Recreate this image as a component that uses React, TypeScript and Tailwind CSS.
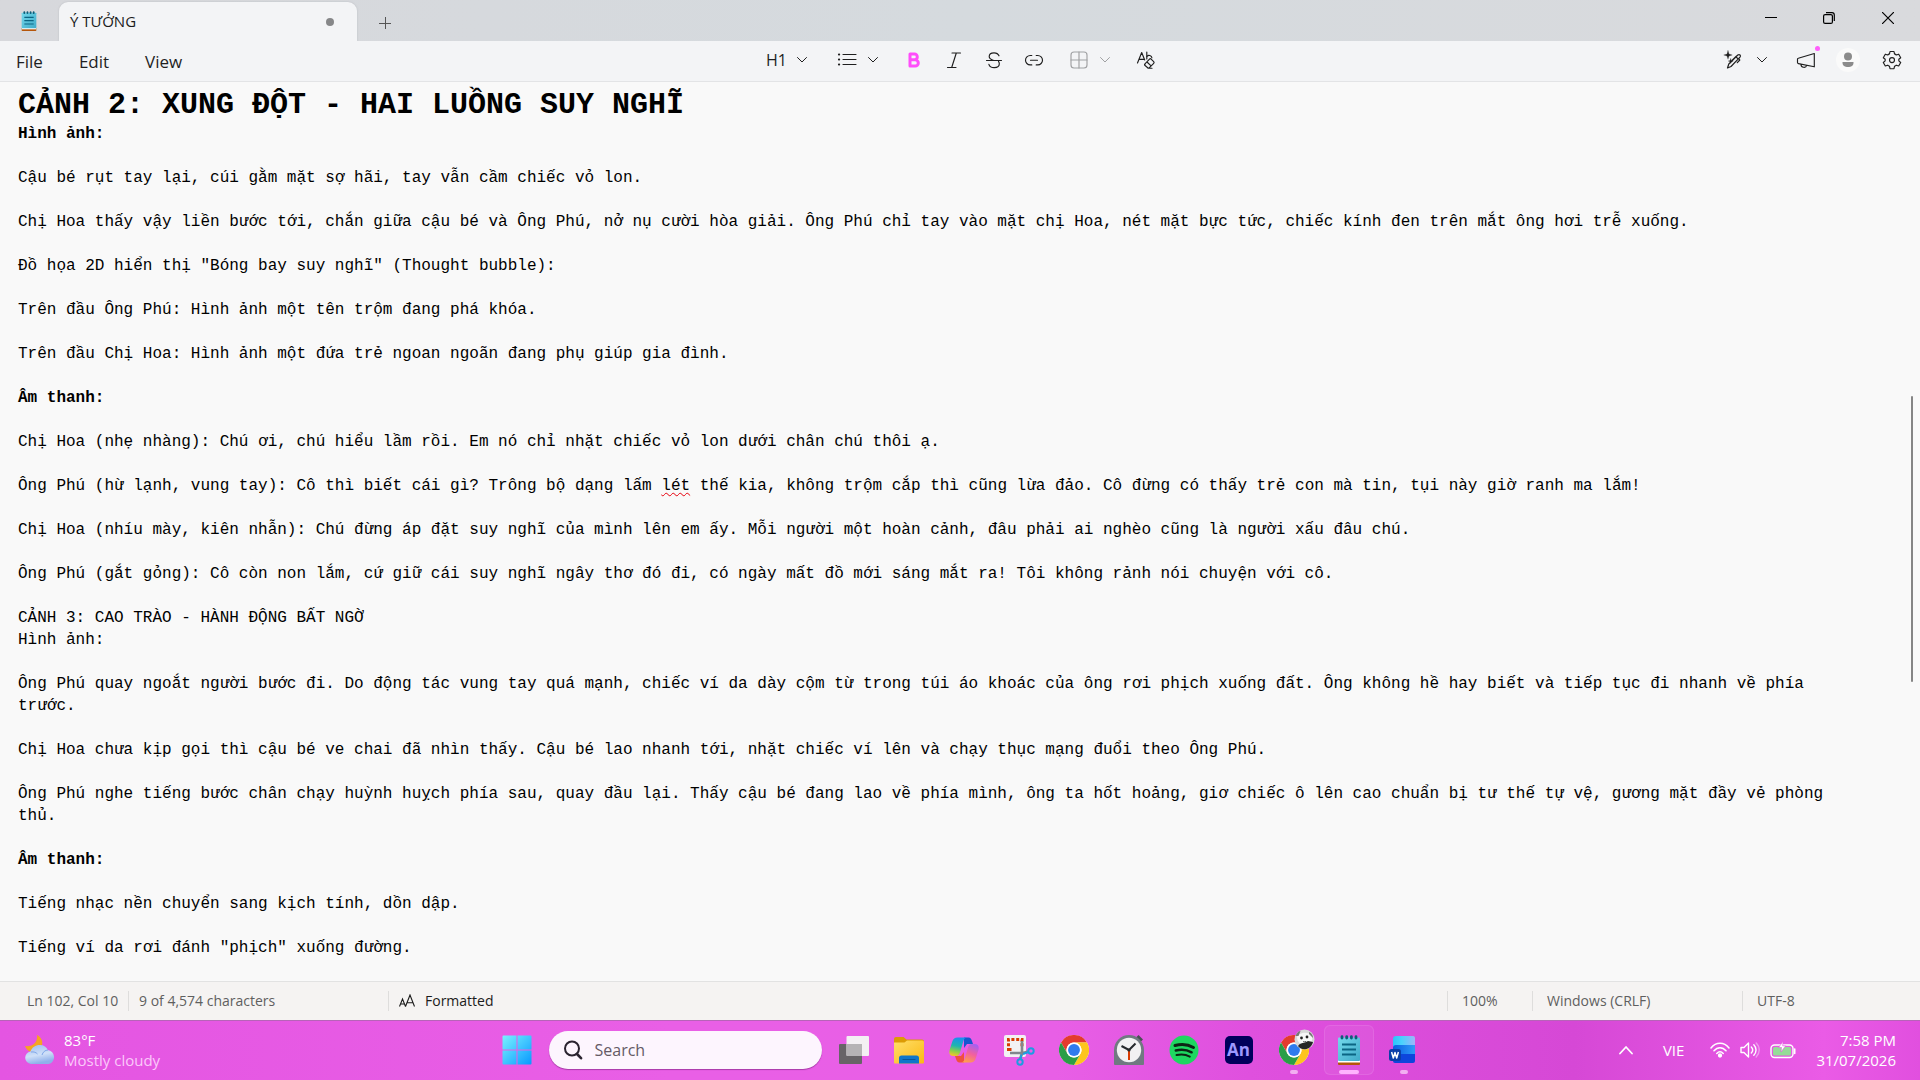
import React from "react";

type Line = { text: string; bold?: boolean; typo?: string };

const lines: Line[] = [
  { text: "Hình ảnh:", bold: true },
  { text: "" },
  { text: "Cậu bé rụt tay lại, cúi gằm mặt sợ hãi, tay vẫn cầm chiếc vỏ lon." },
  { text: "" },
  {
    text: "Chị Hoa thấy vậy liền bước tới, chắn giữa cậu bé và Ông Phú, nở nụ cười hòa giải. Ông Phú chỉ tay vào mặt chị Hoa, nét mặt bực tức, chiếc kính đen trên mắt ông hơi trễ xuống.",
  },
  { text: "" },
  { text: 'Đồ họa 2D hiển thị "Bóng bay suy nghĩ" (Thought bubble):' },
  { text: "" },
  { text: "Trên đầu Ông Phú: Hình ảnh một tên trộm đang phá khóa." },
  { text: "" },
  { text: "Trên đầu Chị Hoa: Hình ảnh một đứa trẻ ngoan ngoãn đang phụ giúp gia đình." },
  { text: "" },
  { text: "Âm thanh:", bold: true },
  { text: "" },
  { text: "Chị Hoa (nhẹ nhàng): Chú ơi, chú hiểu lầm rồi. Em nó chỉ nhặt chiếc vỏ lon dưới chân chú thôi ạ." },
  { text: "" },
  {
    text: "Ông Phú (hừ lạnh, vung tay): Cô thì biết cái gì? Trông bộ dạng lấm lét thế kia, không trộm cắp thì cũng lừa đảo. Cô đừng có thấy trẻ con mà tin, tụi này giờ ranh ma lắm!",
    typo: "lét",
  },
  { text: "" },
  {
    text: "Chị Hoa (nhíu mày, kiên nhẫn): Chú đừng áp đặt suy nghĩ của mình lên em ấy. Mỗi người một hoàn cảnh, đâu phải ai nghèo cũng là người xấu đâu chú.",
  },
  { text: "" },
  {
    text: "Ông Phú (gắt gỏng): Cô còn non lắm, cứ giữ cái suy nghĩ ngây thơ đó đi, có ngày mất đồ mới sáng mắt ra! Tôi không rảnh nói chuyện với cô.",
  },
  { text: "" },
  { text: "CẢNH 3: CAO TRÀO - HÀNH ĐỘNG BẤT NGỜ" },
  { text: "Hình ảnh:" },
  { text: "" },
  {
    text: "Ông Phú quay ngoắt người bước đi. Do động tác vung tay quá mạnh, chiếc ví da dày cộm từ trong túi áo khoác của ông rơi phịch xuống đất. Ông không hề hay biết và tiếp tục đi nhanh về phía trước.",
  },
  { text: "" },
  {
    text: "Chị Hoa chưa kịp gọi thì cậu bé ve chai đã nhìn thấy. Cậu bé lao nhanh tới, nhặt chiếc ví lên và chạy thục mạng đuổi theo Ông Phú.",
  },
  { text: "" },
  {
    text: "Ông Phú nghe tiếng bước chân chạy huỳnh huỵch phía sau, quay đầu lại. Thấy cậu bé đang lao về phía mình, ông ta hốt hoảng, giơ chiếc ô lên cao chuẩn bị tư thế tự vệ, gương mặt đầy vẻ phòng thủ.",
  },
  { text: "" },
  { text: "Âm thanh:", bold: true },
  { text: "" },
  { text: "Tiếng nhạc nền chuyển sang kịch tính, dồn dập." },
  { text: "" },
  { text: 'Tiếng ví da rơi đánh "phịch" xuống đường.' },
];

const TextLine = ({ line }: { line: Line }) => {
  const [before, after] = line.typo ? line.text.split(line.typo) : [line.text, ""];
  return (
    <p className={line.bold ? "min-h-[22px] font-bold" : "min-h-[22px]"}>
      {before}
      {line.typo && (
        <span className="underline decoration-red-600 decoration-wavy decoration-1 underline-offset-2">
          {line.typo}
        </span>
      )}
      {after}
    </p>
  );
};

/* ---------- small line icons ---------- */

const Chevron = ({ up = false }: { up?: boolean }) => (
  <svg width="12" height="12" viewBox="0 0 12 12" fill="none" stroke="currentColor" strokeWidth="1" strokeLinecap="round" strokeLinejoin="round">
    <path d={up ? "M1.5 8.5 6 4l4.5 4.5" : "M1.5 3.5 6 8l4.5-4.5"} />
  </svg>
);

const Icon = ({ children, width = 1.15 }: { children: React.ReactNode; width?: number }) => (
  <svg width="20" height="20" viewBox="0 0 20 20" fill="none" stroke="currentColor" strokeWidth={width} strokeLinecap="round" strokeLinejoin="round">
    {children}
  </svg>
);

const ListIcon = () => (
  <Icon>
    <path d="M6 4.5h13M6 9.5h13M6 14.5h13" />
    <path d="M2 4.5h.1M2 9.5h.1M2 14.5h.1" strokeWidth="2.2" />
  </Icon>
);

const BoldIcon = () => (
  <Icon width={3}>
    <path d="M6 4h4.4a2.9 2.9 0 0 1 0 5.8H6zM6 9.8h5.2a3.1 3.1 0 0 1 0 6.2H6z" />
  </Icon>
);

const ItalicIcon = () => (
  <Icon>
    <path d="M8 3h8.500M3.500 17.500H12M12.300 3 7.700 17.500" />
  </Icon>
);

const StrikeIcon = () => (
  <Icon>
    <path d="M2.500 10.500h15M15 5.800C14.200 3.800 12.400 2.800 10 2.800c-2.800 0-4.800 1.500-4.800 3.700 0 2 1.500 3 4.600 4M14.500 11.500c.6.600.8 1.400.8 2.200 0 2.300-2.100 3.900-5 3.900-2.700 0-4.800-1.200-5.400-3.300" />
  </Icon>
);

const LinkIcon = () => (
  <Icon>
    <path d="M7.800 5.500H6.200a4.700 4.700 0 0 0 0 9.400h1.600M12.200 5.500h1.600a4.700 4.700 0 0 1 0 9.400h-1.600M6.500 10.200h7" />
  </Icon>
);

const TableIcon = () => (
  <Icon>
    <rect x="2" y="2" width="16" height="16" rx="3" />
    <path d="M10 2v16M2 10h16" />
  </Icon>
);

const ClearFormatIcon = () => (
  <Icon>
    <path d="M1.500 13 5.700 2.500 8.700 10M3 9.300h5M10.800 2v7" />
    <path d="M10.900 6.500c1.500-2 4.700-1.100 5 1.300" />
    <path d="m8.500 14.300 5-5.200c.5-.5 1.100-.5 1.600 0l2.600 2.600c.5.500.5 1.100 0 1.600l-4.300 4.400c-.5.500-1.200.5-1.700 0l-2.900-2.400c-.3-.3-.3-.7.300-1zM11 12l3.800 3.700M12 18.200h4" />
  </Icon>
);

const RewriteIcon = () => (
  <Icon width={1.2}>
    <path d="M6 .500 7 4l3.300 1L7 6 6 9.300 5 6 1.700 5 5 4zM8.700 8.500l.7 1.900 1.900.6-1.900.7-.7 1.800-.6-1.800-1.900-.7 1.900-.6z" fill="currentColor" strokeWidth="0.2" />
    <path d="m5.500 18 1.300-4 9-9c1.700-1.300 3.500.5 2.200 2.200l-9 9.300zM14.200 7l2 2.200M17 8.700l.8 1.300-2.500 2.700M10 10.500l4-4" />
  </Icon>
);

const MegaphoneIcon = () => (
  <Icon>
    <path d="M18.300 3.500v13.300L2.400 13.600a1 1 0 0 1-.9-1V9.300a1 1 0 0 1 .8-1zM5 14.200c-.2 3.600 5 4.200 5.600 1.100" />
  </Icon>
);

const GearIcon = () => (
  <Icon>
    <path d="m8 1.500-.5 2.400c-.7.300-1.300.6-1.800 1.100l-2.400-.8-2 3.500 1.900 1.600c-.1.500-.1 1.100 0 1.600l-1.900 1.600 2 3.500 2.400-.8c.5.500 1.100.8 1.800 1.100l.5 2.400h4l.5-2.400c.7-.3 1.300-.6 1.800-1.100l2.400.8 2-3.500-1.900-1.600c.1-.5.100-1.100 0-1.600l1.900-1.600-2-3.500-2.400.8c-.5-.5-1.100-.8-1.800-1.100L12 1.500z" />
    <circle cx="10" cy="10.100" r="2.500" />
  </Icon>
);

/* ---------- colour icons ---------- */

const NotepadIcon = ({ size }: { size: number }) => (
  <svg width={size} height={size} viewBox="0 0 30 30">
    <defs>
      <linearGradient id="pad" x1="0" y1="0" x2="1" y2="1">
        <stop offset="0" stopColor="#74d9ec" />
        <stop offset="1" stopColor="#3faac8" />
      </linearGradient>
    </defs>
    <rect x="4" y="25" width="22" height="5" rx="1" fill="#b5560b" />
    <rect x="4" y="25" width="22" height="2.500" fill="#fff" />
    <rect x="4" y="2.500" width="22" height="23.500" rx="1" fill="url(#pad)" />
    <path d="M8 1.700v1.400M12.700 1.700v1.400M17.400 1.700v1.400M22 1.700v1.400" stroke="#0d5d78" strokeWidth="2.800" strokeLinecap="round" />
    <path d="M8 9.500h14M8 14.500h14M8 19.500h14" stroke="#0b6583" strokeWidth="1.800" />
  </svg>
);

const WeatherIcon = () => (
  <svg width="32" height="32" viewBox="0 0 32 32">
    <defs>
      <linearGradient id="cloud" x1="0" y1="0" x2="0.300" y2="1">
        <stop offset="0" stopColor="#9dbdf2" />
        <stop offset="0.600" stopColor="#cfe0f8" />
        <stop offset="1" stopColor="#8fb0ea" />
      </linearGradient>
    </defs>
    <path d="M13 1c4 2 6 6 5 10s-5 7-9 7c-4 0-7-3-8-6 7 1 13-3 12-11z" fill="#f6a323" />
    <path d="M7 30a6.300 6.300 0 0 1-.5-12.500C8 13 12 10.800 16 11c4 0 6.500 2 7.800 5A7.100 7.100 0 0 1 24.500 30z" fill="url(#cloud)" />
    <path d="M18 21c1-3 3-5 6-5M7 18c3-.5 5 .500 6.500 2" stroke="#7ea6e8" strokeWidth="1" fill="none" />
  </svg>
);

const WindowsIcon = () => (
  <svg width="30" height="30" viewBox="0 0 30 30">
    <defs>
      <linearGradient id="win" gradientUnits="userSpaceOnUse" x1="0" y1="0" x2="30" y2="30">
        <stop offset="0" stopColor="#7cf4ff" />
        <stop offset="1" stopColor="#0697ff" />
      </linearGradient>
    </defs>
    <path d="M.500 1.500a1 1 0 0 1 1-1h13v14H.500zM15.500.500h13a1 1 0 0 1 1 1v13h-14zM.500 15.500h14v14h-13a1 1 0 0 1-1-1zM15.500 15.500h14v13a1 1 0 0 1-1 1h-13z" fill="url(#win)" />
  </svg>
);

const TaskViewIcon = () => (
  <svg width="30" height="30" viewBox="0 0 30 30">
    <rect x="0" y="9" width="23" height="20" rx="1" fill="#676467" />
    <rect x="7.500" y="1" width="22.500" height="20" rx="1" fill="#f3f0f3" />
    <path d="M7.500 9H23v12H8.500a1 1 0 0 1-1-1z" fill="#b5b3b5" />
  </svg>
);

const ExplorerIcon = () => (
  <svg width="30" height="30" viewBox="0 0 30 30">
    <defs>
      <linearGradient id="folder" x1="0" y1="0" x2="1" y2="1">
        <stop offset="0" stopColor="#ffdf69" />
        <stop offset="1" stopColor="#fbb913" />
      </linearGradient>
    </defs>
    <path d="M0 4a2 2 0 0 1 2-2h7.500l3 2.500H28a2 2 0 0 1 2 2V12H0z" fill="#dc9b04" />
    <path d="M0 7.500h10.500L13 5.500h15.500A1.500 1.500 0 0 1 30 7v20.500a1 1 0 0 1-1 1H1a1 1 0 0 1-1-1z" fill="url(#folder)" />
    <path d="M5 28.500V23a2.500 2.500 0 0 1 2.500-2.500h15A2.500 2.500 0 0 1 25 23v5.500z" fill="#0f76c9" />
    <path d="M9 24.500h12" stroke="#07549b" strokeWidth="1.200" strokeLinecap="round" />
  </svg>
);

const CopilotIcon = () => (
  <svg width="30" height="30" viewBox="0 0 30 30">
    <defs>
      <linearGradient id="copLeft" x1="0.500" y1="0" x2="0.300" y2="1">
        <stop offset="0" stopColor="#1a8ff0" />
        <stop offset="0.450" stopColor="#1fb5b0" />
        <stop offset="0.750" stopColor="#8bd04a" />
        <stop offset="1" stopColor="#f5c52c" />
      </linearGradient>
      <linearGradient id="copRight" x1="0.700" y1="0" x2="0.300" y2="1">
        <stop offset="0" stopColor="#a660f2" />
        <stop offset="0.500" stopColor="#f2609f" />
        <stop offset="1" stopColor="#ffa04a" />
      </linearGradient>
    </defs>
    <path d="M15 2.500h4.500c2 0 2.800 1.300 3.400 3.200L24 9h-6l-3 4z" fill="#1557d0" />
    <path d="M15 27.500h-4.500c-2 0-2.800-1.300-3.400-3.200L6 21h6l3-4z" fill="#f0503f" />
    <path d="M8.500 2.500H18c-2 0-3 1.500-3.600 3.500L10.800 18c-.6 2-1.800 3-3.600 3H4.500C.8 21-.3 18.500.600 15l2.700-8.500C4.100 4 5.800 2.500 8.500 2.500z" fill="url(#copLeft)" />
    <path d="M21.500 27.500H12c2 0 3-1.500 3.600-3.500L19.200 12c.6-2 1.800-3 3.600-3h2.700c3.700 0 4.800 2.500 3.900 6l-2.700 8.500c-.8 2.500-2.500 4-5.200 4z" fill="url(#copRight)" />
  </svg>
);

const SnipIcon = () => (
  <svg width="32" height="32" viewBox="0 0 32 32" fill="none">
    <rect x="1" y="1" width="22" height="22" rx="2" fill="#f2f1f3" />
    <path d="M5.500 17V5.500H19V13M5.500 15.500h4" stroke="#d83b01" strokeWidth="3" strokeDasharray="3 1.800" />
    <path d="M19 7v12.500L17 25M7 19h13l5-1.500" stroke="#81878d" strokeWidth="2.600" />
    <circle cx="28" cy="17" r="2.700" stroke="#1b9de2" strokeWidth="2" />
    <circle cx="17" cy="28" r="2.700" stroke="#1b9de2" strokeWidth="2" />
    <path d="m20 20 5.500-2M18.500 20.500 17.500 25" stroke="#1b9de2" strokeWidth="2" />
  </svg>
);

const ChromeIcon = () => (
  <svg width="30" height="30" viewBox="0 0 48 48">
    <circle cx="24" cy="24" r="24" fill="#fff" />
    <path d="M3.200 12A24 24 0 0 1 44.800 12H24a12 12 0 0 0-10.400 18z" fill="#e33b2e" />
    <path d="M44.800 12A24 24 0 0 1 24 48l10.400-18A12 12 0 0 0 24 12z" fill="#fdc51d" />
    <path d="M24 48A24 24 0 0 1 3.200 12l10.400 18a12 12 0 0 0 20.800 0z" fill="#2a9e47" />
    <circle cx="24" cy="24" r="12" fill="#fff" />
    <circle cx="24" cy="24" r="9.500" fill="#2f7bee" />
  </svg>
);

const ChromeProfileIcon = () => (
  <span className="relative">
    <ChromeIcon />
    <svg className="absolute -top-1.5 -right-1.5" width="21" height="21" viewBox="0 0 21 21">
      <circle cx="10.500" cy="10.500" r="10" fill="#d9d9d9" />
      <path d="M3 8c2-5 12-6 15-1 1 4-1 8-4 9-5 2-11-2-11-8z" fill="#f7f7f7" />
      <path d="M1.500 7c1-3 3-5 5-5l-2 5zM15 3c3 1 4 4 4 6l-4-4z" fill="#777" />
      <circle cx="7.500" cy="9" r="1.400" fill="#222" />
      <circle cx="13" cy="8" r="1.400" fill="#222" />
      <path d="M4 17c2-3 4-3 6-3l4-2 5 1c-1 4-4 7-8 7.300-3 .2-5-1-7-3.300z" fill="#252525" />
      <path d="M9 12.500c1 .700 2 .600 3-.200" stroke="#333" fill="none" />
    </svg>
  </span>
);

const ClockIcon = () => (
  <svg width="30" height="30" viewBox="0 0 30 30">
    <path d="m24.500 0 4.500 4.500-2.500 2.500L22 2.500z" fill="#494f55" />
    <path d="M0 15a15 15 0 0 1 30 0v14a1 1 0 0 1-1 1H1a1 1 0 0 1-1-1z" fill="#707981" />
    <circle cx="15" cy="15" r="12.200" fill="#f1f1f2" />
    <path d="M7.500 11 15 15l6.500-6.500" stroke="#25292c" strokeWidth="2" fill="none" />
    <path d="M15 15v10" stroke="#d83b01" strokeWidth="2" />
    <circle cx="15" cy="15" r="1.600" fill="#25292c" />
  </svg>
);

const SpotifyIcon = () => (
  <svg width="30" height="30" viewBox="0 0 30 30" fill="none" stroke="#0d2414" strokeLinecap="round">
    <circle cx="15" cy="15" r="14.500" fill="#1ed760" stroke="none" />
    <path d="M6 10.500c6.500-1.800 13-1.200 18.500 2" strokeWidth="3" />
    <path d="M6.800 15.500c5.500-1.500 11-.9 15.800 1.800" strokeWidth="2.500" />
    <path d="M7.500 20c5-1.200 9.300-.7 13.300 1.600" strokeWidth="2" />
  </svg>
);

const AnimateIcon = () => (
  <span className="flex h-7 w-7 items-center justify-center rounded-[5px] bg-[#00005b] font-['Open_Sans',sans-serif] text-[17px] font-bold text-[#9d99ff]">
    An
  </span>
);

const WordIcon = () => (
  <svg width="30" height="30" viewBox="0 0 30 30">
    <defs>
      <linearGradient id="wTop" x1="0" y1="0" x2="1" y2="0">
        <stop offset="0" stopColor="#2cc5fb" />
        <stop offset="0.400" stopColor="#4ad2fd" />
        <stop offset="1" stopColor="#9fb4fa" />
      </linearGradient>
      <linearGradient id="wMid" x1="0" y1="0" x2="1" y2="0">
        <stop offset="0" stopColor="#0a5ee0" />
        <stop offset="1" stopColor="#2e9bf8" />
      </linearGradient>
    </defs>
    <path d="M4 4a3 3 0 0 1 3-3h17a2 2 0 0 1 2 2v8H4z" fill="url(#wTop)" />
    <path d="M4 13a3 3 0 0 1 3-3h19v10H4z" fill="url(#wMid)" />
    <path d="M4 19h22v7a2 2 0 0 1-2 2H6a2 2 0 0 1-2-2z" fill="#0d45dc" />
    <rect x="0" y="14" width="12" height="12" rx="2.500" fill="#0b3fa8" />
    <path d="m2.600 17 1.700 6L6 17.500 7.700 23l1.700-6" stroke="#fff" strokeWidth="1.500" fill="none" strokeLinejoin="round" />
  </svg>
);

const SearchIcon = () => (
  <svg width="20" height="20" viewBox="0 0 20 20" fill="none" stroke="#2b2430" strokeWidth="2" strokeLinecap="round">
    <circle cx="9" cy="8.500" r="7" />
    <path d="m14 14 4 4.200" strokeWidth="2.600" />
  </svg>
);

const WifiIcon = () => (
  <svg width="20" height="16" viewBox="0 0 20 16" fill="none" stroke="#fff" strokeWidth="1.500" strokeLinecap="round">
    <path d="M1 6C6-.3 14-.3 19 6M4 8.800c3.500-4.200 8.500-4.200 12 0M6.800 11.500c2-2.300 4.400-2.300 6.400 0" />
    <circle cx="10" cy="13.500" r="1.400" fill="#fff" />
  </svg>
);

const SoundIcon = () => (
  <svg width="20" height="18" viewBox="0 0 20 18" fill="none" stroke="#fff" strokeWidth="1.400" strokeLinecap="round" strokeLinejoin="round">
    <path d="M1 6.500h3L8.500 2v14L4 11.500H1zM11.300 6c1.600 1.700 1.600 4.300 0 6M13.800 3.800c3 3 3 7.400 0 10.400" />
    <path d="M16.200 2c4 4 4 10 0 14" opacity="0.400" />
  </svg>
);

const BatteryIcon = () => (
  <svg width="26" height="18" viewBox="0 0 26 18" fill="none">
    <rect x="1" y="4" width="22" height="12.500" rx="3.500" stroke="#fff" strokeWidth="1.400" />
    <rect x="3" y="6" width="18" height="8.500" rx="1.500" fill="#96dc98" />
    <path d="M24.700 8v4.500" stroke="#fff" strokeWidth="1.600" strokeLinecap="round" />
    <path d="M13 .500 8.500 6.500h3L11 11l4.700-6.200h-3z" fill="#fff" stroke="#e455e1" strokeWidth="0.600" />
  </svg>
);

const taskbarApps = [
  { name: "Task View", icon: <TaskViewIcon /> },
  { name: "File Explorer", icon: <ExplorerIcon /> },
  { name: "Copilot", icon: <CopilotIcon /> },
  { name: "Snipping Tool", icon: <SnipIcon /> },
  { name: "Chrome", icon: <ChromeIcon /> },
  { name: "Clock", icon: <ClockIcon /> },
  { name: "Spotify", icon: <SpotifyIcon /> },
  { name: "Animate", icon: <AnimateIcon /> },
  { name: "Chrome profile", icon: <ChromeProfileIcon />, open: true },
  { name: "Notepad", icon: <NotepadIcon size={30} />, active: true },
  { name: "Word", icon: <WordIcon />, open: true },
];

const TitleBar = () => (
  <header className="flex h-[41px] bg-linear-to-r from-[#d7d8dc] via-[#d5dade] to-[#d9dadd]">
    <div className="flex w-[59px] items-center justify-center pr-0.5">
      <NotepadIcon size={20} />
    </div>
    <div className="mt-0.5 flex w-[298px] items-center justify-between rounded-t-[9px] bg-[#f3f4f6] pr-[23px] pl-[11px] shadow-[0_0_2px_#b8babf]">
      <span className="text-[15px] text-[#1b1b1b]">Ý TƯỞNG</span>
      <span className="h-2 w-2 rounded-full bg-[#868789]" />
    </div>
    <button aria-label="New tab" className="ml-[18px] flex w-5 items-center justify-center pt-1 text-[#555]">
      <svg width="12" height="12" viewBox="0 0 12 12" stroke="currentColor">
        <path d="M0 6.500h12M6.500 0v12" />
      </svg>
    </button>
    <div className="ml-auto flex pr-0.5 pb-1.5 text-black">
      <button aria-label="Minimize" className="flex w-[58px] items-center justify-center">
        <svg width="12" height="12" viewBox="0 0 12 12" stroke="currentColor">
          <path d="M0 5.500h12" />
        </svg>
      </button>
      <button aria-label="Restore" className="flex w-[58px] items-center justify-center">
        <svg width="12" height="12" viewBox="0 0 12 12" fill="none" stroke="currentColor" strokeWidth="1.200">
          <rect x="0.600" y="2.600" width="8.800" height="8.800" rx="1.500" />
          <path d="M3 .700h6a2.300 2.300 0 0 1 2.300 2.300v6" />
        </svg>
      </button>
      <button aria-label="Close" className="flex w-[60px] items-center justify-center">
        <svg width="12" height="12" viewBox="0 0 12 12" stroke="currentColor" strokeWidth="1.200">
          <path d="m0 0 12 12M12 0 0 12" />
        </svg>
      </button>
    </div>
  </header>
);

const Toolbar = () => (
  <nav className="flex h-[41px] items-center border-b border-[#e3e4e6] bg-[#f3f4f6] pb-0.5 text-[#1f1f1f]">
    <div className="flex flex-1 gap-9 pt-1 pl-4 text-[17px]">
      <button>File</button>
      <button>Edit</button>
      <button>View</button>
    </div>
    <div className="flex items-center gap-[21px]">
      <button aria-label="Headings" className="flex items-center gap-2.5 px-1">
        <span className="w-5">H1</span>
        <Chevron />
      </button>
      <button aria-label="Lists" className="flex items-center gap-2.5 px-1">
        <ListIcon />
        <Chevron />
      </button>
      <div className="flex gap-5">
        <button aria-label="Bold" className="text-[#ff4dfb]">
          <BoldIcon />
        </button>
        <button aria-label="Italic">
          <ItalicIcon />
        </button>
        <button aria-label="Strikethrough">
          <StrikeIcon />
        </button>
        <button aria-label="Link">
          <LinkIcon />
        </button>
      </div>
      <button aria-label="Table" className="flex items-center gap-2.5 px-1 text-[#a0a1a3]">
        <TableIcon />
        <Chevron />
      </button>
      <button aria-label="Clear formatting">
        <ClearFormatIcon />
      </button>
    </div>
    <div className="flex flex-1 items-center justify-end pr-[18px]">
      <button aria-label="Rewrite" className="mr-7 flex items-center gap-3.5">
        <RewriteIcon />
        <Chevron />
      </button>
      <button aria-label="What's new" className="relative mr-5">
        <MegaphoneIcon />
        <span className="absolute -top-1 -right-1 h-[5px] w-[5px] rounded-full bg-[#ff5ffb]" />
      </button>
      <button aria-label="Account" className="mr-[22px] rounded-full bg-[#fafafa]">
        <svg width="24" height="24" viewBox="0 0 24 24" fill="#8b8b8b">
          <circle cx="12" cy="8.500" r="4" />
          <path d="M6.500 14h11v.700c0 3-2.500 4.300-5.500 4.300s-5.500-1.300-5.500-4.300z" />
        </svg>
      </button>
      <button aria-label="Settings">
        <GearIcon />
      </button>
    </div>
  </nav>
);

const StatusBar = () => (
  <footer className="flex h-[39px] items-center border-t border-[#e2e2e2] bg-[#f5f3f2] text-sm leading-5 text-[#5f5f5f]">
    <span className="w-[129px] border-r border-[#dedddc] pl-[27px]">Ln 102, Col 10</span>
    <span className="w-[260px] border-r border-[#dedddc] pl-2.5">9 of 4,574 characters</span>
    <span className="flex items-center gap-2.5 pl-2.5 text-[#1b1b1b]">
      <svg width="16" height="14" viewBox="0 0 16 14" fill="none" stroke="currentColor" strokeWidth="1.100">
        <path d="M.500 12.500 3.500 5l3 7.500M1.500 10h4M6.500 12.500 11 1l4.500 11.500M8 8.800h6" />
      </svg>
      Formatted
    </span>
    <span className="ml-auto w-[85px] border-l border-[#dedddc] pl-3.5">100%</span>
    <span className="w-[210px] border-l border-[#dedddc] pl-3.5">Windows (CRLF)</span>
    <span className="w-[178px] border-l border-[#dedddc] pl-3.5">UTF-8</span>
  </footer>
);

const Taskbar = () => (
  <div className="flex h-[60px] items-center border-t border-[#b763b8] bg-[linear-gradient(90deg,#e455e2_0%,#e95fe6_35%,#e85fe6_55%,#df50de_65%,#d648d6_82%,#ea5be6_95%,#e14fdf_100%)] pb-px text-[15px] leading-5 text-white">
    <div className="flex flex-1 items-center gap-2 pl-6">
      <WeatherIcon />
      <div>
        <p>83°F</p>
        <p className="text-[#fbc9fa]">Mostly cloudy</p>
      </div>
    </div>
    <div className="flex items-center gap-[7px]">
      <button aria-label="Start" className="flex h-[50px] w-[50px] items-center justify-center">
        <WindowsIcon />
      </button>
      <label className="flex h-[38px] w-[273px] items-center gap-3 rounded-full bg-[#fdf5fe] px-3.5 shadow-[0_1px_1px_#a83aa8]">
        <SearchIcon />
        <input aria-label="Search" placeholder="Search" className="min-w-0 flex-1 bg-transparent text-base outline-none placeholder:text-[#655a66]" />
      </label>
      <div className="flex gap-[5px]">
        {taskbarApps.map((app) => (
          <button
            key={app.name}
            aria-label={app.name}
            className={
              app.active
                ? "relative flex h-[50px] w-[50px] items-center justify-center rounded-md border border-white/10 bg-white/5"
                : "relative flex h-[50px] w-[50px] items-center justify-center"
            }
          >
            {app.icon}
            {app.open && <span className="absolute bottom-px h-1 w-2 rounded-full bg-[#f2aef1]" />}
            {app.active && <span className="absolute bottom-0 h-1 w-5 rounded-full bg-[#ffb4fe]" />}
          </button>
        ))}
      </div>
    </div>
    <div className="flex flex-1 items-center justify-end pr-6">
      <button aria-label="Hidden icons" className="mr-[30px]">
        <svg width="14" height="10" viewBox="0 0 14 10" fill="none" stroke="#fff" strokeWidth="1.800" strokeLinecap="round" strokeLinejoin="round">
          <path d="M1 8.500 7 2l6 6.500" />
        </svg>
      </button>
      <button className="mr-[26px]">VIE</button>
      <button aria-label="Network, volume and battery" className="mr-5 flex items-center gap-2.5">
        <WifiIcon />
        <SoundIcon />
        <BatteryIcon />
      </button>
      <div className="text-right">
        <p>7:58 PM</p>
        <p>31/07/2026</p>
      </div>
    </div>
  </div>
);

export default function App() {
  return (
    <div className="flex h-screen flex-col overflow-hidden font-['Open_Sans','Noto_Sans',sans-serif]">
      <TitleBar />
      <Toolbar />
      <main className="relative min-h-0 flex-1 overflow-hidden bg-[#f9f9f9]">
        <div
          role="textbox"
          aria-multiline="true"
          aria-label="Document"
          className="max-w-[192ch] pt-[5px] pl-[18px] font-['Liberation_Mono',monospace] text-base leading-[22px] text-black"
        >
          <h1 className="text-[30px] leading-9 font-bold">CẢNH 2: XUNG ĐỘT - HAI LUỒNG SUY NGHĨ</h1>
          {lines.map((line, i) => (
            <TextLine key={i} line={line} />
          ))}
        </div>
        <div className="absolute top-[314px] right-[7px] h-[286px] w-0.5 rounded-full bg-[#858585]" />
      </main>
      <StatusBar />
      <Taskbar />
    </div>
  );
}
